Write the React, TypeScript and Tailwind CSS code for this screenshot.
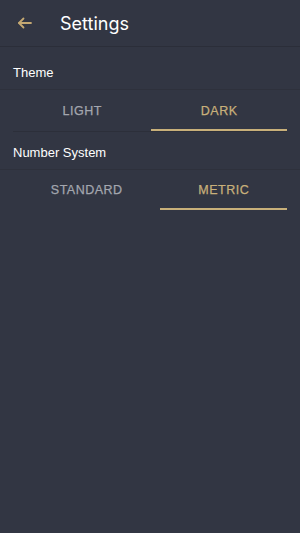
import React, { useState } from 'react';

type TabsProps = {
  options: string[];
  value: string;
  onChange: (v: string) => void;
  height: string;
  bordered?: boolean;
};

const Tabs: React.FC<TabsProps> = ({ options, value, onChange, height, bordered }) => (
  <div className={`mx-[13px] flex ${height} ${bordered ? 'border-b border-[#2c2f3a]' : ''}`}>
    {options.map((opt) => {
      const active = opt === value;
      return (
        <button
          key={opt}
          onClick={() => onChange(opt)}
          className={`flex-auto flex items-center justify-center pt-[3px] text-[12.5px] font-normal tracking-[0.04em] border-b-2 [-webkit-text-stroke:0.25px_currentColor] ${
            active ? 'text-[#c8b07a] border-[#c8b07a]' : 'text-[#a3a6ae] border-transparent'
          }`}
        >
          {opt}
        </button>
      );
    })}
  </div>
);

export default function App() {
  const [theme, setTheme] = useState('DARK');
  const [numbers, setNumbers] = useState('METRIC');

  return (
    <div className="min-h-[533px] w-full bg-[#323643] text-white font-['Liberation_Sans',Arial,sans-serif]">
      <header className="flex h-[47px] items-center border-b border-[#2b2e39]">
        <button className="ml-[13px] flex h-6 w-6 items-center justify-center text-[#c4a872]">
          <svg width="18" height="18" viewBox="0 0 24 24" fill="none" stroke="currentColor" strokeWidth="2.4" strokeLinecap="round" strokeLinejoin="round">
            <path d="M20 12H4" />
            <path d="M10 6l-6 6 6 6" />
          </svg>
        </button>
        <h1 className="ml-[23px] text-[18px] text-white font-['Inter',Roboto,sans-serif]">Settings</h1>
      </header>

      <div className="flex h-[43px] items-end border-b border-[#2e313c] px-[13px] pb-[7px] text-[13px]">
        Theme
      </div>
      <Tabs options={['LIGHT', 'DARK']} value={theme} onChange={setTheme} height="h-[42px]" bordered />

      <div className="flex h-[38px] items-end border-b border-[#2e313c] px-[13px] pb-[7px] text-[13px]">
        Number System
      </div>
      <Tabs options={['STANDARD', 'METRIC']} value={numbers} onChange={setNumbers} height="h-[40px]" />
    </div>
  );
}
